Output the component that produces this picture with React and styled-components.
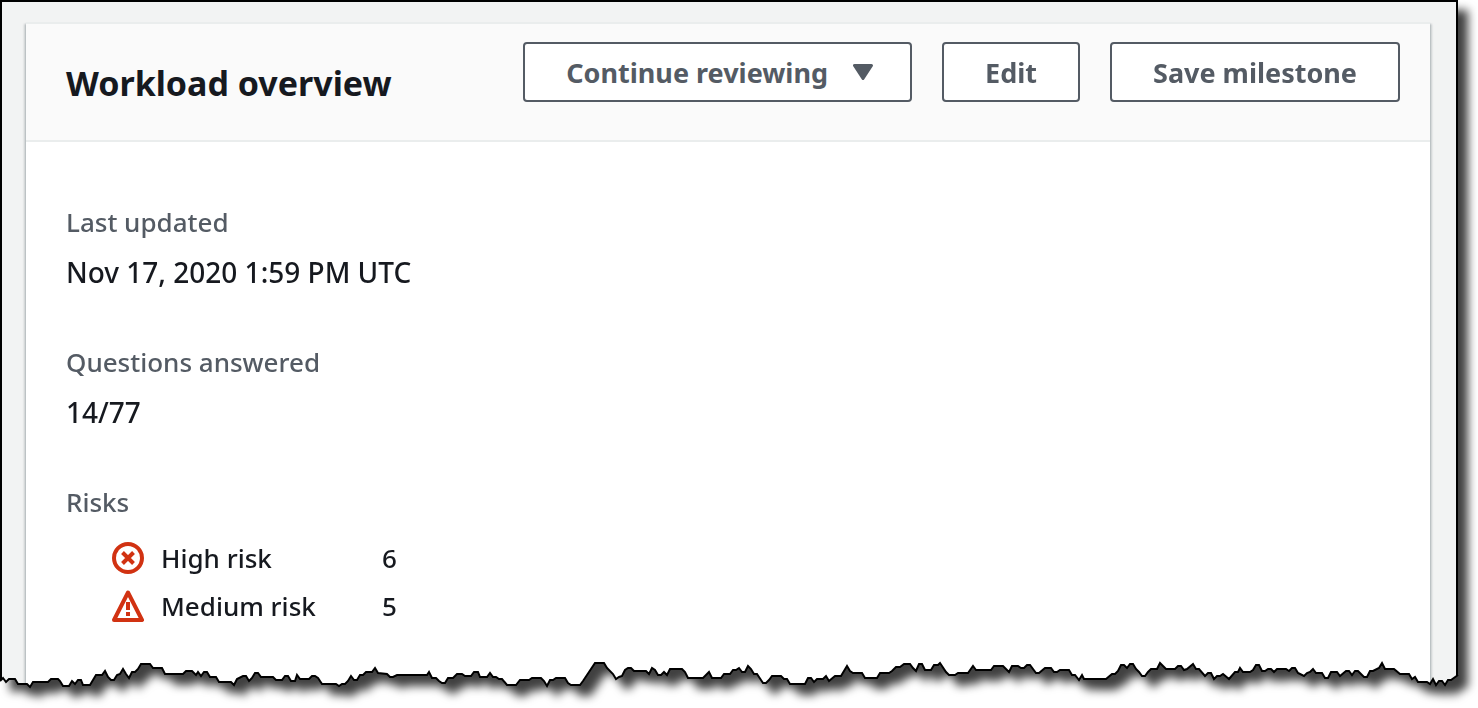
import React from "react";
import styled, { createGlobalStyle } from "styled-components";

const Color = {
  black: "#000000",
  white: "#ffffff",
  page: "#f2f3f3",
  header: "#fafafa",
  line: "#eaeded",
  text: "#16191f",
  muted: "#545b64",
  risk: "#d13212",
};

const TEAR_WIDTH = 1458;
const TEAR_HEIGHT = 28;

// x, y pairs of the torn paper edge, left to right
const tearPoints = `0,21 3,18 6,22 9,19 15,19 18,24 27,24 30,27 33,22 48,22 51,19 58,19 60,21 63,26
69,26 72,21 75,24 78,20 81,20 83,25 90,25 96,15 102,15 105,11 108,17 111,20 114,20 117,15 120,14
123,9 126,14 129,18 132,12 135,12 138,9 141,4 150,4 153,8 162,8 165,14 183,14 186,11 192,11 196,15
198,12 201,16 204,12 207,12 210,17 216,17 219,22 231,22 234,25 237,19 243,16 246,16 249,21 252,18
255,13 258,13 261,17 273,17 276,20 282,20 285,16 288,16 291,21 295,21 297,15 300,19 309,19 312,16
315,16 318,18 322,24 336,24 339,26 342,24 345,24 348,21 351,16 354,20 357,20 360,15 363,15 366,12
372,12 375,8 378,13 387,14 390,17 393,17 397,15 427,15 429,12 432,18 436,18 439,21 442,23 445,23
448,18 453,18 457,14 462,14 465,16 471,16 474,12 478,12 480,17 487,17 490,13 493,17 496,17 499,19
502,19 507,25 516,25 520,20 529,20 532,18 541,18 544,21 547,26 550,20 553,20 556,18 565,18 568,23
571,25 580,25 583,21 595,3 604,3 607,8 613,14 616,19 619,17 622,16 625,10 628,8 631,8 634,11 646,11
649,14 652,8 655,10 658,15 661,15 664,12 667,15 670,9 682,9 685,12 688,18 703,18 709,12 712,18
721,18 724,14 730,14 733,10 736,10 739,8 742,12 745,12 748,6 751,9 754,14 757,14 763,23 766,23
769,20 772,16 781,16 784,19 787,19 790,24 805,24 808,18 811,18 814,22 817,19 823,19 826,16 829,21
835,16 841,16 847,6 850,11 853,13 862,13 865,18 877,18 880,13 889,13 892,11 896,7 900,7 904,4 910,4
913,8 916,11 919,4 922,4 925,10 931,10 934,5 938,5 940,3 946,12 949,15 955,15 958,13 968,13 973,6
976,10 991,10 994,6 1003,6 1009,12 1012,6 1018,6 1021,8 1024,8 1027,5 1030,5 1036,13 1039,13 1045,8
1051,8 1054,12 1057,12 1060,10 1069,10 1072,15 1075,15 1079,20 1082,15 1084,19 1106,19 1112,14
1115,14 1118,11 1121,5 1124,5 1127,8 1130,4 1133,4 1136,9 1139,12 1142,16 1145,16 1148,12 1151,9
1157,9 1160,3 1166,9 1175,9 1178,6 1181,6 1184,10 1187,9 1193,4 1196,9 1199,9 1205,16 1208,13
1211,13 1214,19 1217,16 1220,16 1223,14 1229,19 1235,12 1238,12 1240,8 1243,12 1250,12 1253,10
1256,5 1259,5 1262,11 1265,11 1268,9 1271,9 1274,12 1277,9 1286,9 1289,11 1292,8 1295,8 1298,13
1304,16 1307,13 1310,12 1313,9 1316,13 1322,13 1325,18 1328,18 1331,12 1337,12 1340,16 1346,11
1349,11 1352,15 1355,11 1358,11 1364,17 1367,17 1370,11 1373,11 1379,8 1382,3 1385,9 1394,9 1400,14
1409,14 1412,19 1415,17 1418,22 1427,22 1430,24 1433,19 1436,25 1439,21 1442,21 1445,25 1448,20
1451,20 1458,15`
  .split(/\s+/)
  .map((pair) => pair.split(",").map(Number));

const tearClip = tearPoints
  .map(([x, y]) => `${(x / TEAR_WIDTH) * 100}% calc(100% - ${TEAR_HEIGHT - y}px)`)
  .reverse()
  .join(", ");

const tearLine = tearPoints.map((point) => point.join(",")).join(" ");

const details = [
  { label: "Last updated", value: "Nov 17, 2020 1:59 PM UTC" },
  { label: "Questions answered", value: "14/77" },
];

const risks = [
  { label: "High risk", count: 6, Icon: HighRiskIcon },
  { label: "Medium risk", count: 5, Icon: MediumRiskIcon },
];

function HighRiskIcon() {
  return (
    <svg width="32" height="32" viewBox="0 0 32 32" fill="none" aria-hidden="true">
      <circle cx="16" cy="16" r="14" stroke={Color.risk} strokeWidth="4" />
      <path d="M10.5 10.5l11 11M21.5 10.5l-11 11" stroke={Color.risk} strokeWidth="4" />
    </svg>
  );
}

function MediumRiskIcon() {
  return (
    <svg width="32" height="32" viewBox="0 0 32 32" fill="none" aria-hidden="true">
      <path
        d="M16 2.5L30 30H2z"
        stroke={Color.risk}
        strokeWidth="4"
        strokeLinejoin="round"
      />
      <path d="M16 12v8M16 22v4" stroke={Color.risk} strokeWidth="4" />
    </svg>
  );
}

function CaretIcon() {
  return (
    <svg width="20" height="16" viewBox="0 0 20 16" aria-hidden="true">
      <path
        d="M1.5 1.5h17L10 14.5z"
        fill={Color.muted}
        stroke={Color.muted}
        strokeWidth="3"
        strokeLinejoin="round"
      />
    </svg>
  );
}

export default function App() {
  return (
    <>
      <GlobalStyle />
      <Frame>
        <Paper>
          <Panel>
            <PanelHeader>
              <Title>Workload overview</Title>
              <Actions>
                <Button type="button">
                  Continue reviewing
                  <CaretIcon />
                </Button>
                <Button type="button">Edit</Button>
                <Button type="button">Save milestone</Button>
              </Actions>
            </PanelHeader>
            <Details>
              {details.map(({ label, value }) => (
                <div key={label}>
                  <Label>{label}</Label>
                  <Value>{value}</Value>
                </div>
              ))}
              <div>
                <Label>Risks</Label>
                <RiskList>
                  {risks.map(({ label, count, Icon }) => (
                    <Risk key={label}>
                      <Icon />
                      <span>{label}</span>
                      <span>{count}</span>
                    </Risk>
                  ))}
                </RiskList>
              </div>
            </Details>
          </Panel>
        </Paper>
        <TearLine
          viewBox={`0 0 ${TEAR_WIDTH} ${TEAR_HEIGHT}`}
          preserveAspectRatio="none"
          aria-hidden="true"
        >
          <polyline points={tearLine} />
        </TearLine>
      </Frame>
    </>
  );
}

const GlobalStyle = createGlobalStyle`
  * {
    box-sizing: border-box;
  }

  body {
    margin: 0;
    background-color: ${Color.white};
    color: ${Color.text};
    font-family: "Noto Sans", "Open Sans", sans-serif;
    font-size: 26px;
    font-weight: 500;
    line-height: 44px;
  }
`;

const Frame = styled.main`
  position: relative;
  margin: 0 20px 20px 0;
  filter: drop-shadow(10px 10px 5px rgba(0, 0, 0, 0.75));
`;

const Paper = styled.div`
  padding: 20px 26px 0 24px;
  border: 2px solid ${Color.black};
  border-bottom: 0;
  background-color: ${Color.page};
  clip-path: polygon(0 0, 100% 0, ${tearClip});
`;

const TearLine = styled.svg`
  position: absolute;
  left: 0;
  bottom: 0;
  width: 100%;
  height: ${TEAR_HEIGHT}px;
  overflow: visible;

  polyline {
    fill: none;
    stroke: ${Color.black};
    stroke-width: 2px;
    vector-effect: non-scaling-stroke;
  }
`;

const Panel = styled.section`
  border-top: 2px solid ${Color.line};
  background-color: ${Color.white};
  box-shadow: 0 2px 2px rgba(0, 28, 36, 0.3), 2px 2px 2px rgba(0, 28, 36, 0.15),
    -2px 2px 2px rgba(0, 28, 36, 0.15);
`;

const PanelHeader = styled.header`
  display: flex;
  justify-content: space-between;
  align-items: center;
  padding: 18px 30px 38px 40px;
  border-bottom: 2px solid ${Color.line};
  background-color: ${Color.header};
`;

const Title = styled.h2`
  margin: 22px 0 0;
  font-size: 34px;
  line-height: 38px;
  font-weight: 700;
`;

const Actions = styled.div`
  display: flex;
  gap: 30px;
`;

const Button = styled.button`
  display: flex;
  align-items: center;
  gap: 25px;
  height: 60px;
  padding: 0 41px;
  border: 2px solid ${Color.muted};
  border-radius: 4px;
  background-color: ${Color.white};
  color: ${Color.muted};
  font-family: inherit;
  font-size: 27px;
  font-weight: 700;
  white-space: nowrap;
  cursor: pointer;

  svg {
    margin-right: -4px;
  }
`;

const Details = styled.dl`
  display: grid;
  gap: 46px;
  margin: 0;
  padding: 58px 40px;
`;

const Label = styled.dt`
  color: ${Color.muted};
`;

const Value = styled.dd`
  margin: 6px 0 0;
  font-size: 28px;
`;

const RiskList = styled.dd`
  display: grid;
  margin: 10px 0 0 46px;
`;

const Risk = styled.div`
  display: grid;
  grid-template-columns: 32px 204px auto;
  justify-content: start;
  align-items: center;
  column-gap: 17px;
  height: 48px;
`;
